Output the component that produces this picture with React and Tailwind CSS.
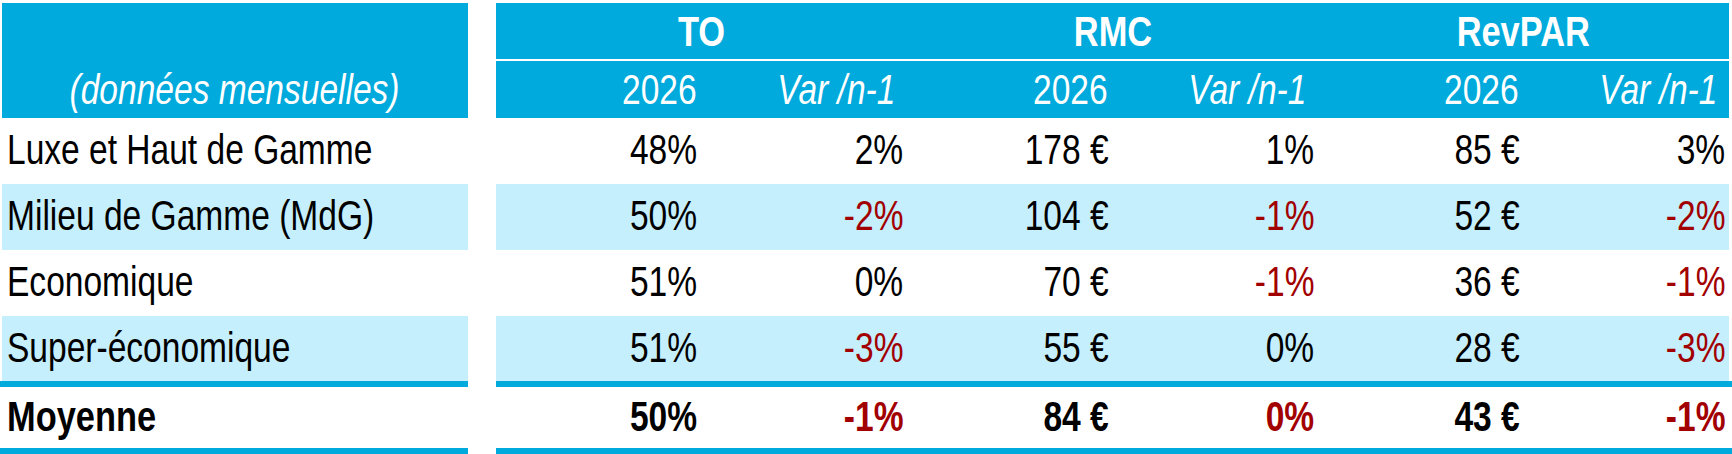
import React from "react";

const rows = [
  { label: "Luxe et Haut de Gamme", v: ["48%", "2%", "178 €", "1%", "85 €", "3%"], h: "h-[66px]", bg: "bg-white" },
  { label: "Milieu de Gamme (MdG)", v: ["50%", "-2%", "104 €", "-1%", "52 €", "-2%"], h: "h-[66px]", bg: "bg-[#c5effc]" },
  { label: "Economique", v: ["51%", "0%", "70 €", "-1%", "36 €", "-1%"], h: "h-[66px]", bg: "bg-white" },
  { label: "Super-économique", v: ["51%", "-3%", "55 €", "0%", "28 €", "-3%"], h: "h-[65px]", bg: "bg-[#c5effc]" },
];

// narrow text: Arial Narrow is not installed, so squeeze Liberation Sans
function N({ children, origin = "origin-right", bold }) {
  return (
    <span className={"inline-block whitespace-nowrap " + origin + (bold ? " scale-x-[0.8]" : " scale-x-[0.78]")}>
      {children}
    </span>
  );
}

function Cell({ value }) {
  const neg = value.startsWith("-");
  return (
    <div className={"flex items-center justify-end pr-[4px] pb-[3px] " + (neg ? "text-[#a20000]" : "text-black")}>
      <N>{value}</N>
    </div>
  );
}

function Line() {
  return (
    <div className="flex h-[6px]">
      <div className="w-[468px] bg-[#00aadc]" />
      <div className="w-[28px]" />
      <div className="flex-1 bg-[#00aadc]" />
    </div>
  );
}

export default function App() {
  return (
    <div
      className="w-[1732px] h-[454px] bg-white pt-[3px] text-[43px] leading-none"
      style={{ fontFamily: "'Liberation Sans', Arial, sans-serif" }}
    >
      <div className="flex">
        <div className="ml-[2px] w-[466px] h-[115px] bg-[#00aadc] flex flex-col">
          <div className="h-[58px]" />
          <div className="flex-1 flex items-center justify-center italic text-white">
            <N origin="origin-center">(données mensuelles)</N>
          </div>
        </div>
        <div className="w-[28px]" />
        <div className="w-[1233px] flex flex-col">
          <div className="h-[56px] bg-[#00aadc] grid grid-cols-3 font-bold text-white">
            <div className="flex items-center justify-center"><N bold origin="origin-center">TO</N></div>
            <div className="flex items-center justify-center"><N bold origin="origin-center">RMC</N></div>
            <div className="flex items-center justify-center"><N bold origin="origin-center">RevPAR</N></div>
          </div>
          <div className="h-[2px] bg-white" />
          <div className="h-[57px] bg-[#00aadc] grid grid-cols-6 text-white">
            {[0, 1, 2].map((i) => (
              <React.Fragment key={i}>
                <div className="flex items-center justify-end pr-[5px]"><N>2026</N></div>
                <div className="flex items-center justify-end pr-[12px] italic"><N>Var /n-1</N></div>
              </React.Fragment>
            ))}
          </div>
        </div>
      </div>

      {rows.map((r) => (
        <div key={r.label} className={"flex " + r.h}>
          <div className={"ml-[2px] w-[466px] flex items-center pl-[5px] pb-[3px] " + r.bg}>
            <N origin="origin-left">{r.label}</N>
          </div>
          <div className="w-[28px]" />
          <div className={"w-[1233px] grid grid-cols-6 " + r.bg}>
            {r.v.map((v, i) => (
              <Cell key={i} value={v} />
            ))}
          </div>
        </div>
      ))}

      <Line />
      <div className="flex h-[61px] font-bold">
        <div className="ml-[2px] w-[466px] flex items-center pl-[5px] pb-[3px]">
          <N bold origin="origin-left">Moyenne</N>
        </div>
        <div className="w-[28px]" />
        <div className="w-[1233px] grid grid-cols-6">
          {["50%", "-1%", "84 €", "0%", "43 €", "-1%"].map((v, i) => (
            <div
              key={i}
              className={"flex items-center justify-end pr-[4px] pb-[3px] " + (i % 2 === 1 ? "text-[#a20000]" : "text-black")}
            >
              <N>{v}</N>
            </div>
          ))}
        </div>
      </div>
      <Line />
    </div>
  );
}
